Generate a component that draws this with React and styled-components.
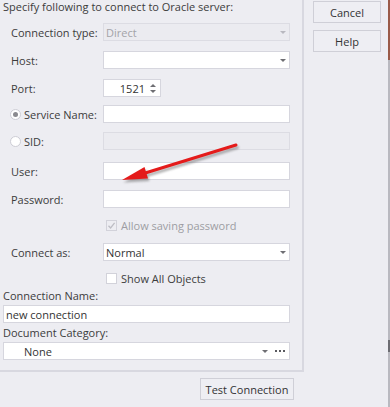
import styled, { createGlobalStyle } from "styled-components";

const GlobalStyle = createGlobalStyle`
  html, body { margin: 0; padding: 0; }
  body {
    background: #EDEDF2;
    font-family: "Open Sans", "Noto Sans", sans-serif;
    font-size: 11px;
    color: #3c3c3c;
  }
`;

const Window = styled.div`
  position: relative;
  width: 390px;
  height: 407px;
  display: flex;
  overflow: hidden;
  background: #EDEDF2;
`;

const LeftCol = styled.div`
  width: 304px;
  display: flex;
  flex-direction: column;
`;

const Group = styled.div`
  height: 372px;
  box-sizing: border-box;
  border-right: 2px solid #D8D8E0;
  border-bottom: 2px solid #D8D8E0;
  padding: 0 12px 0 3px;
  display: flex;
  flex-direction: column;
`;

const Caption = styled.div`
  height: 14px;
  line-height: 14px;
  white-space: nowrap;
`;

const Row = styled.div`
  display: grid;
  grid-template-columns: 100px 187px;
  align-items: center;
  height: 18px;
  margin-top: ${(p) => p.$mt}px;
`;

const Label = styled.div`
  padding-left: ${(p) => (p.$radio ? 7 : 8)}px;
  display: flex;
  align-items: center;
  gap: 3px;
  white-space: nowrap;
`;

const Radio = styled.span`
  width: 11px;
  height: 11px;
  box-sizing: border-box;
  border-radius: 50%;
  border: 1px solid #CDCDD5;
  background: #fff;
  display: flex;
  align-items: center;
  justify-content: center;
  &::after {
    content: "";
    width: 5px;
    height: 5px;
    border-radius: 50%;
    background: ${(p) => (p.$checked ? "#8a8a8f" : "transparent")};
  }
`;

const Field = styled.div`
  height: 18px;
  box-sizing: border-box;
  border: 1px solid ${(p) => (p.$disabled ? "#DCDCE3" : "#D6D6DE")};
  background: ${(p) => (p.$disabled ? "#EBEBF0" : "#ffffff")};
  color: ${(p) => (p.$disabled ? "#a3a3a8" : "#333")};
  width: ${(p) => p.$w || "auto"};
  display: flex;
  align-items: center;
  padding: 0 ${(p) => p.$pr ?? 2}px 0 ${(p) => p.$pl ?? 2}px;
  white-space: nowrap;
`;

const FieldText = styled.span`
  flex: 1;
  text-align: ${(p) => p.$align || "left"};
`;

const DropArrow = styled.span`
  width: 0;
  height: 0;
  border-left: 3px solid transparent;
  border-right: 3px solid transparent;
  border-top: 3px solid ${(p) => (p.$disabled ? "#b8b8bf" : "#6e6e73")};
  margin-left: 4px;
`;

const Spin = styled.span`
  display: flex;
  flex-direction: column;
  gap: 3px;
  margin-left: 5px;
  margin-right: 1px;
`;

const SpinUp = styled.span`
  width: 0;
  height: 0;
  border-left: 3px solid transparent;
  border-right: 3px solid transparent;
  border-bottom: 3px solid #6e6e73;
`;

const SpinDown = styled(SpinUp)`
  border-bottom: none;
  border-top: 3px solid #6e6e73;
`;

const Dots = styled.span`
  display: flex;
  gap: 2px;
  margin-left: 7px;
  margin-right: 1px;
`;

const Dot = styled.span`
  width: 2px;
  height: 2px;
  background: #5a5a60;
`;

const CheckRow = styled.div`
  margin-top: ${(p) => p.$mt}px;
  height: 18px;
  padding-left: 103px;
  display: flex;
  align-items: center;
  gap: 4px;
  color: ${(p) => (p.$disabled ? "#9d9da3" : "#3c3c3c")};
  white-space: nowrap;
`;

const Box = styled.span`
  width: 11px;
  height: 11px;
  box-sizing: border-box;
  border: 1px solid #D2D2DA;
  background: ${(p) => (p.$disabled ? "#EDEDF2" : "#fff")};
  display: flex;
  align-items: center;
  justify-content: center;
`;

const PlainLabel = styled.div`
  margin-top: ${(p) => p.$mt}px;
  height: 14px;
  line-height: 14px;
  white-space: nowrap;
`;

const WideRow = styled.div`
  margin-top: ${(p) => p.$mt}px;
  width: 287px;
`;

const Footer = styled.div`
  display: flex;
  justify-content: flex-end;
  padding: 6px 10px 0 0;
`;

const Button = styled.button`
  height: 22px;
  width: ${(p) => p.$w}px;
  box-sizing: border-box;
  border: 1px solid #CFCFD7;
  background: #EEEEF3;
  font-family: "Open Sans", "Noto Sans", sans-serif;
  font-size: 11px;
  color: #333;
  padding: 0;
`;

const RightCol = styled.div`
  flex: 1;
  display: flex;
  flex-direction: column;
  gap: 7px;
  padding: 1px 0 0 9px;
`;

const Edge = styled.div`
  width: 2px;
  background: linear-gradient(#9a5a48 0, #9a5a48 60px, #b9b9c0 60px, #b9b9c0 340px, #6c6c72 340px, #6c6c72 352px, #b9b9c0 352px);
`;

const Overlay = styled.svg`
  position: absolute;
  left: 0;
  top: 0;
  pointer-events: none;
`;

function Combo({ text, disabled, w, pl }) {
  return (
    <Field $disabled={disabled} $w={w} $pl={pl} $pr={3}>
      <FieldText>{text}</FieldText>
      <DropArrow $disabled={disabled} />
    </Field>
  );
}

export default function App() {
  return (
    <Window>
      <GlobalStyle />
      <LeftCol>
        <Group>
          <Caption>Specify following to connect to Oracle server:</Caption>

          <Row $mt={9}>
            <Label>Connection type:</Label>
            <Combo text="Direct" disabled />
          </Row>
          <Row $mt={10}>
            <Label>Host:</Label>
            <Combo text="" />
          </Row>
          <Row $mt={10}>
            <Label>Port:</Label>
            <Field $w="58px" $pr={3}>
              <FieldText $align="right">1521</FieldText>
              <Spin>
                <SpinUp />
                <SpinDown />
              </Spin>
            </Field>
          </Row>
          <Row $mt={8}>
            <Label $radio>
              <Radio $checked />
              Service Name:
            </Label>
            <Field />
          </Row>
          <Row $mt={9}>
            <Label $radio>
              <Radio />
              SID:
            </Label>
            <Field $disabled />
          </Row>
          <Row $mt={12}>
            <Label>User:</Label>
            <Field />
          </Row>
          <Row $mt={10}>
            <Label>Password:</Label>
            <Field />
          </Row>

          <CheckRow $mt={8} $disabled>
            <Box $disabled>
              <svg width="9" height="9" viewBox="0 0 9 9">
                <path d="M1.5 4.8 L3.6 7 L7.6 1.8" fill="none" stroke="#bdbdc4" strokeWidth="1.3" />
              </svg>
            </Box>
            Allow saving password
          </CheckRow>

          <Row $mt={9}>
            <Label>Connect as:</Label>
            <Combo text="Normal" />
          </Row>

          <CheckRow $mt={8}>
            <Box />
            Show All Objects
          </CheckRow>

          <PlainLabel $mt={2}>Connection Name:</PlainLabel>
          <WideRow $mt={2}>
            <Field>new connection</Field>
          </WideRow>
          <PlainLabel $mt={3}>Document Category:</PlainLabel>
          <WideRow $mt={2}>
            <Field $pl={20} $pr={3}>
              <FieldText>None</FieldText>
              <DropArrow />
              <Dots>
                <Dot />
                <Dot />
                <Dot />
              </Dots>
            </Field>
          </WideRow>
        </Group>
        <Footer>
          <Button $w={94}>Test Connection</Button>
        </Footer>
      </LeftCol>

      <RightCol>
        <Button $w={68}>Cancel</Button>
        <Button $w={68}>Help</Button>
      </RightCol>
      <Edge />

      <Overlay width="390" height="407" viewBox="0 0 390 407">
        <defs>
          <filter id="sh" x="-20%" y="-50%" width="140%" height="200%">
            <feGaussianBlur stdDeviation="1.2" />
          </filter>
        </defs>
        <g transform="translate(1.5,2.5)" opacity="0.45" filter="url(#sh)">
          <path d="M236 145 L142 174" stroke="#555" strokeWidth="3" strokeLinecap="round" />
          <path d="M122 180 L144.5 167 L148 178.5 Z" fill="#555" />
        </g>
        <path d="M236 145 L142 174" stroke="#E41B1B" strokeWidth="3" strokeLinecap="round" />
        <path d="M122 180 L144.5 167 L148 178.5 Z" fill="#E41B1B" />
      </Overlay>
    </Window>
  );
}
